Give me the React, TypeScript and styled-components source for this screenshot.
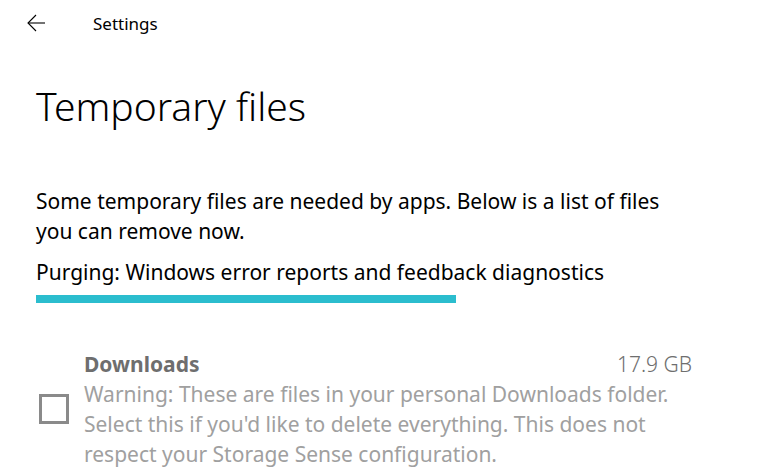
import React from "react";
import styled, { createGlobalStyle } from "styled-components";

const Global = createGlobalStyle`
  html, body { margin: 0; padding: 0; background: #ffffff; }
  body { font-family: "Noto Sans", "Open Sans", sans-serif; color: #000; }
`;

const Page = styled.div`
  width: 783px;
  height: 475px;
  overflow: hidden;
  background: #fff;
`;

const Header = styled.header`
  display: flex;
  align-items: center;
  height: 48px;
  padding-left: 27px;
`;

const BackButton = styled.button`
  display: flex;
  align-items: center;
  justify-content: center;
  width: 18px;
  height: 18px;
  padding: 0;
  border: 0;
  background: transparent;
  margin-right: 48px;
  margin-top: -3px;
`;

const AppTitle = styled.span`
  font-size: 17px;
  color: #000;
  margin-top: -1px;
`;

const Main = styled.main`
  padding: 0 36px;
`;

const PageTitle = styled.h1`
  margin: 30px 0 0;
  font-size: 39px;
  font-weight: 300;
  line-height: 56px;
  color: #000;
`;

const Description = styled.p`
  margin: 52px 0 0;
  font-size: 21px;
  line-height: 30px;
  width: 640px;
`;

const Status = styled.p`
  margin: 11px 0 0;
  font-size: 21px;
  line-height: 30px;
`;

const Track = styled.div`
  width: 420px;
  height: 8px;
  margin-top: 8px;
  background: #2bbdce;
`;

const Item = styled.div`
  display: grid;
  grid-template-columns: 48px 608px;
  margin-top: 46px;
`;

const CheckCell = styled.div`
  display: flex;
  align-items: center;
  padding-left: 3px;
`;

const Checkbox = styled.span`
  display: block;
  box-sizing: border-box;
  width: 30px;
  height: 30px;
  border: 3px solid #8a8a8a;
`;

const ItemBody = styled.div`
  display: flex;
  flex-direction: column;
`;

const ItemHead = styled.div`
  display: flex;
  justify-content: space-between;
  font-size: 21px;
  line-height: 30px;
`;

const ItemName = styled.span`
  font-weight: 700;
  color: #6e6e6e;
`;

const ItemSize = styled.span`
  color: #6e6e6e;
  font-weight: 300;
`;

const ItemText = styled.div`
  font-size: 21px;
  line-height: 30px;
  color: #a0a0a0;
`;

export default function App() {
  return (
    <Page>
      <Global />
      <Header>
        <BackButton aria-label="Back">
          <svg width="18" height="18" viewBox="0 0 18 18" fill="none" stroke="#000" strokeWidth="1.1">
            <path d="M18 9H1" />
            <path d="M9 1L1 9l8 8" />
          </svg>
        </BackButton>
        <AppTitle>Settings</AppTitle>
      </Header>
      <Main>
        <PageTitle>Temporary files</PageTitle>
        <Description>
          Some temporary files are needed by apps. Below is a list of files you can remove now.
        </Description>
        <Status>Purging: Windows error reports and feedback diagnostics</Status>
        <Track />
        <Item>
          <CheckCell>
            <Checkbox />
          </CheckCell>
          <ItemBody>
            <ItemHead>
              <ItemName>Downloads</ItemName>
              <ItemSize>17.9 GB</ItemSize>
            </ItemHead>
            <ItemText>
              Warning: These are files in your personal Downloads folder. Select this if you'd like to delete everything. This does not respect your Storage Sense configuration.
            </ItemText>
          </ItemBody>
        </Item>
      </Main>
    </Page>
  );
}
